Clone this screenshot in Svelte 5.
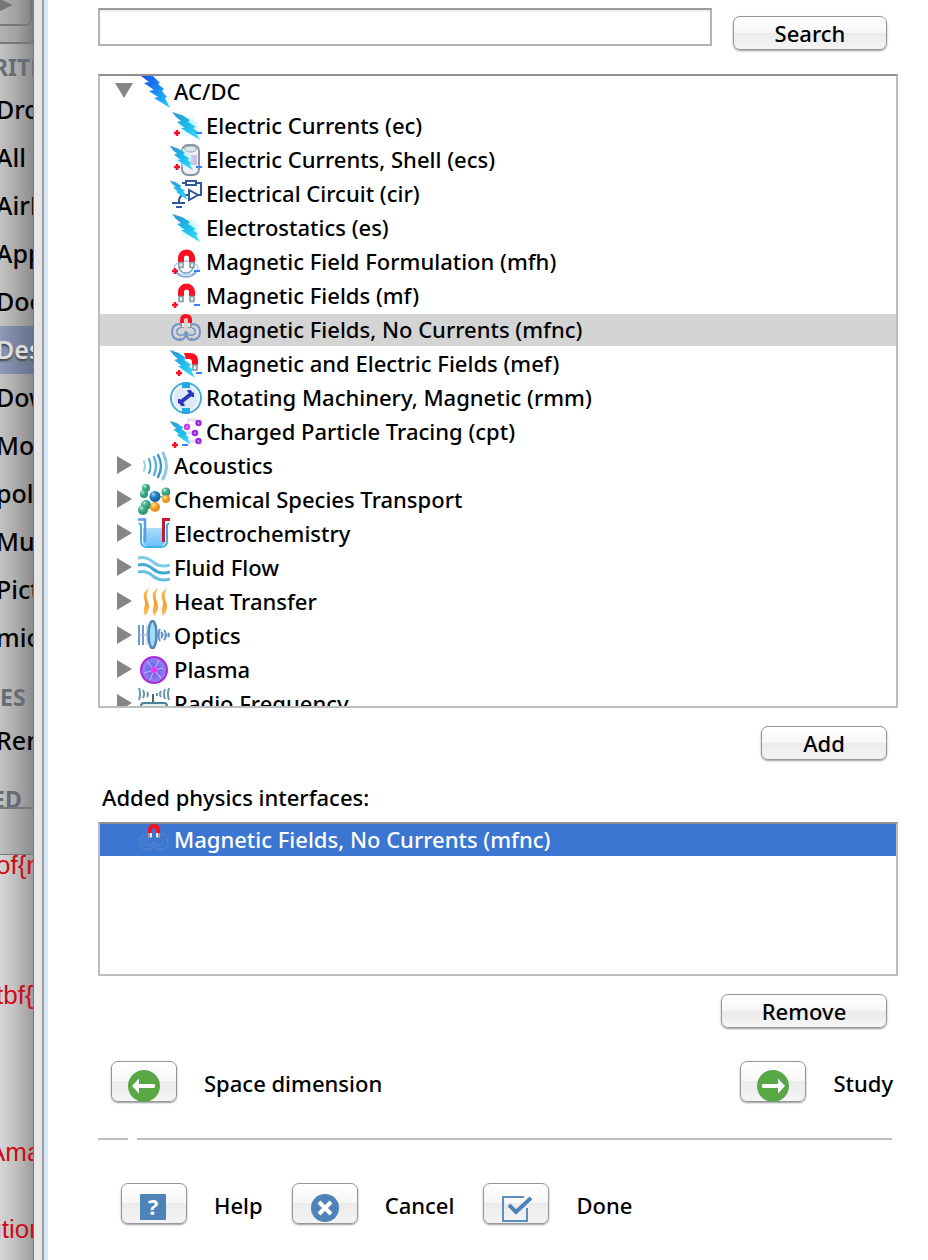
<script>
  const interfaces = [
    { icon: 'ec', name: 'Electric Currents (ec)' },
    { icon: 'ecs', name: 'Electric Currents, Shell (ecs)' },
    { icon: 'cir', name: 'Electrical Circuit (cir)' },
    { icon: 'es', name: 'Electrostatics (es)' },
    { icon: 'mfh', name: 'Magnetic Field Formulation (mfh)' },
    { icon: 'mf', name: 'Magnetic Fields (mf)' },
    { icon: 'mfnc', name: 'Magnetic Fields, No Currents (mfnc)' },
    { icon: 'mef', name: 'Magnetic and Electric Fields (mef)' },
    { icon: 'rmm', name: 'Rotating Machinery, Magnetic (rmm)' },
    { icon: 'cpt', name: 'Charged Particle Tracing (cpt)' }
  ];
  const branches = [
    { icon: 'acoustics', name: 'Acoustics' },
    { icon: 'chemical', name: 'Chemical Species Transport' },
    { icon: 'electrochem', name: 'Electrochemistry' },
    { icon: 'fluid', name: 'Fluid Flow' },
    { icon: 'heat', name: 'Heat Transfer' },
    { icon: 'optics', name: 'Optics' },
    { icon: 'plasma', name: 'Plasma' },
    { icon: 'radio', name: 'Radio Frequency' }
  ];
  const places = ['Dro', 'All', 'AirD', 'App', 'Doc', 'Des', 'Dow', 'Mov', 'polt', 'Mus', 'Pict', 'mic'];
  let selected = $state('mfnc');
  let open = $state(true);
  let query = $state('');
</script>

{#snippet plus(x, y)}
  <path d="M{x - 3} {y}h6M{x} {y - 3}v6" stroke="#f5142b" stroke-width="2.5" />
{/snippet}

{#snippet minus(x, y)}
  <path d="M{x} {y}h6" stroke="#2f86f0" stroke-width="2" />
{/snippet}

{#snippet bolt(glow, place)}
  <g transform={place}>
    {#if glow}<path d="M7 4 22 5 29 13 31 29 14 26 7 15Z" fill="url(#halo)" />{/if}
    <path d="M2 2 12 5 20 10 18 12 26 17 23 18 28 22 26 23 30 30 20 24 11 18 15 18 7 12 11 11 6 7Z" fill="url(#boltfill)" />
  </g>
{/snippet}

{#snippet magnet(place)}
  <g transform={place} fill="none">
    <path d="M11 16V12a5.500 5.500 0 0 1 11 0v4" stroke="#fb1020" stroke-width="6" />
    <path d="M9 16.5h4v5H9zM20 16.5h4v5h-4z" fill="#e8efef" stroke="#84999f" stroke-width="1.6" />
  </g>
{/snippet}

{#snippet icon(name)}
  <svg class="icon" viewBox="0 0 32 32" width="32" height="32" fill="none" aria-hidden="true">
    {#if name === 'acdc'}
      <path d="M3 0H15L22 7 20 8 26 13 24 15 29 21 27 22 32 32 16 22 20 21 11 15 16 14 6 7 11 6Z" fill="url(#mainbolt)" />
    {:else if name === 'ec'}
      {@render bolt(true, '')}{@render plus(7, 23)}{@render minus(26, 23)}
    {:else if name === 'ecs'}
      <rect x="12" y="1" width="17" height="30" rx="6" fill="#f1eff6" stroke="#8496a2" stroke-width="2" />
      <ellipse cx="20.500" cy="5" rx="6" ry="3" fill="#dfe5ea" stroke="#93a3ae" />
      <path d="M21 11h6v10h-6z" fill="#c9c1de" />
      {@render bolt(true, 'translate(-2 0) scale(.84 .88)')}{@render plus(7, 23)}{@render minus(26, 23)}
    {:else if name === 'cir'}
      <path d="M12 5h4M26 5h5v12h-3M19 17h-5q-5 0-5 7M2 25h13M6 29h6M16 3h10v4H16zM19 12v10l9-5z" stroke="#31599a" stroke-width="2" />
      {@render bolt(false, 'translate(-1.500 1) scale(.64 .7)')}
    {:else if name === 'es'}
      {@render bolt(true, '')}
    {:else if name === 'mfh'}
      <ellipse cx="16" cy="22" rx="12" ry="7" stroke="#b4cfe8" stroke-width="1.500" />
      <path d="M5 24q3 7 11 7t11-7M9 22q2 5 7 5t7-5" stroke="#7ba3cb" stroke-width="1.600" />
      {@render magnet('')}{@render plus(5, 25)}{@render minus(24, 25)}
    {:else if name === 'mf'}
      {@render magnet('')}{@render plus(5, 25)}{@render minus(24, 25)}
    {:else if name === 'mfnc' || name === 'mfnc-dim'}
      <g stroke="#7196c2" stroke-width="2" opacity={name === 'mfnc-dim' ? 0.3 : 1}>
        <path d="M10 10q-8 0-8 8t9 8q5-1 5-9M22 10q8 0 8 8t-9 8q-5-1-5-9" />
        <path d="M10 14q-4 1-3 5 1 3 6 2l3-3M22 14q4 1 3 5-1 3-6 2l-3-3M8 26l3-2M24 26l-3-2" stroke-width="1.500" />
      </g>
      <path d="M12 9V6q0-4 4-4t4 4v3" stroke="#fb1020" stroke-width="4" />
      <path d="M10 9h4v5h-4zM18 9h4v5h-4z" fill="#929ba0" />
      <path d="M12 9h2v4h-2zM18 9h2v4h-2z" fill="#e9eef0" />
    {:else if name === 'mef'}
      <path d="M14 5h6q8 0 8 8v4h-6v-3q0-3-3-3h-3z" fill="#fb1020" />
      <path d="M23 17h4v5h-4z" fill="#e8efef" stroke="#84999f" stroke-width="1.600" />
      {@render bolt(false, 'translate(-2 0) scale(.9 1)')}{@render plus(9, 25)}{@render minus(26, 25)}
    {:else if name === 'rmm'}
      <circle cx="16" cy="16" r="15" fill="#dfeaf8" stroke="#4aaadd" stroke-width="2" />
      <circle cx="16" cy="16" r="13" stroke="#f4faff" stroke-width="1.500" />
      <path d="M12 1q4-2 8 0v5h-8zM12 26h8v5q-4 2-8 0z" fill="#20a9e4" />
      <path d="M11 20 21 12" stroke="#2b36bd" stroke-width="4" />
      <path d="M8 17h2l5 6-1 1h-3l-1-2-2-1zM18 8h3l1 2 2 1v4h-2l-5-6z" fill="#2b36bd" />
    {:else if name === 'cpt'}
      <path d="M17 4h10M15 10l4-3M18 17h6M19 25h8" stroke="#ecd9f1" stroke-width="3" />
      {@render bolt(false, 'translate(-2 3) scale(.76 .86)')}
      <g stroke="#9c2de0" stroke-width="2.500" fill="#eedbfa">
        <circle cx="28.500" cy="7" r="2" /><circle cx="17" cy="11" r="2" stroke="#d43ee6" />
        <circle cx="25" cy="17" r="2" /><circle cx="28.500" cy="25" r="2" />
      </g>
      {@render plus(5, 29)}{@render minus(12, 29)}
    {:else if name === 'acoustics'}
      <g stroke-linecap="round">
        <path d="M6 11q2 5 0 10" stroke="#9ed4ec" stroke-width="2" />
        <path d="M11 9q3 7 0 14" stroke="#4aa3cd" stroke-width="2" />
        <path d="M16 7q4 9 0 18" stroke="#5cb5dc" stroke-width="2.500" />
        <path d="M20 5q6 11 0 22" stroke="#3f98c4" stroke-width="2.500" />
        <path d="M25 3q7 13 0 26" stroke="#8dc9e6" stroke-width="3" />
      </g>
    {:else if name === 'chemical'}
      <path d="M8 4 6 11M17 13l9 0M17 14v9M4 27l10-5" stroke="#7cc7ae" stroke-width="2" />
      <g fill="url(#greenball)"><circle cx="8" cy="4" r="4" /><circle cx="6" cy="10" r="4" /><circle cx="28" cy="8" r="4.500" /><circle cx="8" cy="21" r="5" /><circle cx="5" cy="26" r="5" /></g>
      <g fill="url(#orangeball)"><circle cx="28" cy="15" r="4" /><circle cx="17" cy="23" r="5" /></g>
      <circle cx="17" cy="12.500" r="5.500" fill="url(#blueball)" />
    {:else if name === 'electrochem'}
      <path d="M5 10h22v13q0 5-5 5H10q-5 0-5-5z" fill="url(#water)" />
      <path d="M1 5 3 7v16q0 6 6 6h14q6 0 6-6V7l2-2" stroke="#3fb2e8" stroke-width="2" />
      <path d="M0 1.500h7V24" stroke="#5d9be8" stroke-width="2.500" />
      <path d="M32 1.500h-6.500V24" stroke="#c41c34" stroke-width="3" />
    {:else if name === 'fluid'}
      <path d="M0 6q8-2 15 4t17 3" stroke="#7ccbe8" stroke-width="3" />
      <path d="M0 13q8-2 15 4t17 3" stroke="#43abd6" stroke-width="3" />
      <path d="M0 20q8-2 15 4t17 3" stroke="#68bfe2" stroke-width="3" />
    {:else if name === 'heat'}
      {#each [0, 9, 18] as x}
        <path transform="translate({x} 0)" d="M11 2Q4 6 6 12T6 22Q5 26 7 30 13 23 10 16T11 2Z" fill="url(#flame)" />
      {/each}
    {:else if name === 'optics'}
      <path d="M1 5v20M5 5v20" stroke="#6a9bcc" stroke-width="2" />
      <path d="M0 15h32" stroke="#8fb4d8" />
      <path d="M9 5v20" stroke="#9dbfe0" />
      <ellipse cx="14.500" cy="14.500" rx="4" ry="13.500" fill="#a3dbf3" stroke="#5284bd" stroke-width="2.500" />
      <path d="M22 9q-3 6 0 12M26 10q4 5 0 10M23 12q3 3 0 6M30 13q2 2 0 4" stroke="#6193c5" stroke-width="2" />
    {:else if name === 'plasma'}
      <circle cx="16" cy="16" r="13" fill="url(#plasmafill)" stroke="#a32fd9" stroke-width="2" />
      <path d="M16 16 9 7M16 16 21 6M16 16l9-2M16 16l7 8M16 16l-4 10M16 16 6 19" stroke="#d4b9ff" stroke-width="1.200" opacity=".8" />
      <circle cx="16" cy="16" r="3" fill="#e83be2" />
    {:else if name === 'radio'}
      <path d="M1 0q2 6 0 12M5 2q2 4 0 8M9 4q2 2 0 5M31 0q-2 6 0 12M27 1q-2 5 0 10M23 3q-2 3 0 6M19 5v3" stroke="#6798ac" stroke-width="2" />
      <path d="M15 6v9" stroke="#55636a" stroke-width="2" />
      <rect x="3" y="15" width="26" height="14" rx="3" fill="#e7f0f3" stroke="#47829b" stroke-width="2" />
    {:else if name === 'back' || name === 'next'}
      <circle cx="16" cy="16" r="16" fill="#59a846" />
      <path transform={name === 'next' ? 'rotate(180 16 16)' : ''} d="M4 16 11 8.500V14h15q1 0 1 2t-1 2H11v5.500z" fill="#fff" />
    {:else if name === 'help'}
      <rect x="2" y="2" width="26" height="26" rx="1" fill="#4d83b8" />
      <text x="15" y="23" text-anchor="middle" class="mark">?</text>
    {:else if name === 'cancel'}
      <circle cx="16" cy="16" r="14" fill="#4d83b8" />
      <path d="m10 10 12 12M22 10 10 22" stroke="#fff" stroke-width="4" />
    {:else if name === 'done'}
      <path d="M24 5H3v24h24V16" stroke="#5a8fc2" stroke-width="2" />
      <path d="m9 13 7 7L31 6" stroke="#4d83b8" stroke-width="4" />
    {/if}
  </svg>
{/snippet}

<svg class="defs" width="0" height="0" aria-hidden="true">
  <defs>
    <linearGradient id="boltfill" x1="0" y1="0" x2="1" y2="1"><stop offset="0" stop-color="#2f93d0" /><stop offset=".5" stop-color="#1cb9ee" /><stop offset="1" stop-color="#3fe0fa" /></linearGradient>
    <linearGradient id="mainbolt" x1="0" y1="0" x2="1" y2="1"><stop offset="0" stop-color="#1650e6" /><stop offset=".45" stop-color="#1984f3" /><stop offset="1" stop-color="#24d2fa" /></linearGradient>
    <radialGradient id="halo"><stop offset="0" stop-color="#8ee9f7" /><stop offset="1" stop-color="#d8f7fc" stop-opacity=".2" /></radialGradient>
    <radialGradient id="greenball" cx=".35" cy=".3"><stop offset="0" stop-color="#c8f0df" /><stop offset=".5" stop-color="#45b491" /><stop offset="1" stop-color="#2f9877" /></radialGradient>
    <radialGradient id="orangeball" cx=".35" cy=".3"><stop offset="0" stop-color="#ffe9bd" /><stop offset=".5" stop-color="#f8b040" /><stop offset="1" stop-color="#ea921d" /></radialGradient>
    <radialGradient id="blueball" cx=".35" cy=".3"><stop offset="0" stop-color="#a5dcf7" /><stop offset=".5" stop-color="#2b8bc8" /><stop offset="1" stop-color="#1a6aa8" /></radialGradient>
    <linearGradient id="water" x1="0" y1="0" x2="0" y2="1"><stop offset="0" stop-color="#a9dcfa" /><stop offset="1" stop-color="#6fc0f4" /></linearGradient>
    <linearGradient id="flame" x1="0" y1="0" x2="0" y2="1"><stop offset="0" stop-color="#fbc678" /><stop offset=".5" stop-color="#fa9b22" /><stop offset="1" stop-color="#fbc070" /></linearGradient>
    <radialGradient id="plasmafill"><stop offset="0" stop-color="#c15bf0" /><stop offset=".4" stop-color="#6f6af0" /><stop offset=".8" stop-color="#8d7df2" /><stop offset="1" stop-color="#c054ea" /></radialGradient>
  </defs>
</svg>

<div class="screen">
  <aside class="behind">
    <div class="toolbar"><span class="tool"><svg width="16" height="16" viewBox="0 0 16 16"><path d="M0 -1 13 5 0 11z" fill="#777" /></svg></span></div>
    <nav class="places">
      <h2>RITE</h2>
      {#each places as place}
        <div class="place" class:current={place === 'Des'}>{place}</div>
      {/each}
      <h2 class="group">ES</h2>
      <div class="place">Ren</div>
      <h2 class="cut">ED</h2>
    </nav>
    <div class="status"></div>
    <div class="source">
      <p>of{'{'}r</p>
      <p>tbf{'{'}</p>
      <p class="mid">Ama</p>
      <p>ition</p>
    </div>
  </aside>
  <div class="edge"></div>

  <main>
    <form class="search" onsubmit={(e) => e.preventDefault()}>
      <input type="text" aria-label="Search" bind:value={query} />
      <button class="push wide" type="submit">Search</button>
    </form>

    <ul class="box tree" role="tree">
      <li class="row" role="treeitem" aria-selected="false" aria-expanded={open}>
        <button class="toggle" aria-label="AC/DC" onclick={() => (open = !open)}>
          <svg width="18" height="18" viewBox="0 0 18 18"><path d={open ? 'M0 1h18L9 16z' : 'M2 0v18l15-9z'} fill="#868686" /></svg>
        </button>
        {@render icon('acdc')}<span>AC/DC</span>
      </li>
      {#if open}
        {#each interfaces as item}
          <li class="row child" class:selected={selected === item.icon} role="treeitem" aria-selected={selected === item.icon}>
            {@render icon(item.icon)}<button class="name" onclick={() => (selected = item.icon)}>{item.name}</button>
          </li>
        {/each}
      {/if}
      {#each branches as branch}
        <li class="row" role="treeitem" aria-selected="false" aria-expanded="false">
          <button class="toggle" aria-label={branch.name}>
            <svg width="18" height="18" viewBox="0 0 18 18"><path d="M2 0v18l15-9z" fill="#868686" /></svg>
          </button>
          {@render icon(branch.icon)}<span>{branch.name}</span>
        </li>
      {/each}
    </ul>

    <div class="action"><button class="push narrow">Add</button></div>

    <h1 id="added">Added physics interfaces:</h1>
    <ul class="box added" role="listbox" aria-labelledby="added">
      <li class="row active" role="option" aria-selected="true">
        {@render icon('mfnc-dim')}<span>Magnetic Fields, No Currents (mfnc)</span>
      </li>
    </ul>

    <div class="action"><button class="push">Remove</button></div>

    <div class="steps">
      <div class="pair"><button class="push image" id="back" aria-labelledby="back-label">{@render icon('back')}</button><label id="back-label" for="back">Space dimension</label></div>
      <div class="pair"><button class="push image" id="next" aria-labelledby="next-label">{@render icon('next')}</button><label id="next-label" for="next">Study</label></div>
    </div>

    <div class="rule"><span></span><span></span></div>

    <footer>
      <div class="pair"><button class="push image" id="help" aria-labelledby="help-label">{@render icon('help')}</button><label id="help-label" for="help">Help</label></div>
      <div class="pair"><button class="push image" id="cancel" aria-labelledby="cancel-label">{@render icon('cancel')}</button><label id="cancel-label" for="cancel">Cancel</label></div>
      <div class="pair"><button class="push image" id="done" aria-labelledby="done-label">{@render icon('done')}</button><label id="done-label" for="done">Done</label></div>
    </footer>
  </main>
</div>

<style>
  :global(body) { background: #fff; }
  * { box-sizing: border-box; }
  .defs { position: absolute; }
  .screen {
    display: grid;
    grid-template-columns: 34px 14px minmax(0, 1fr);
    min-height: 100vh;
    font: 500 22px/30px "Noto Sans", "Open Sans", sans-serif;
    color: #000;
  }
  button, input { font: inherit; color: inherit; }
  ul, h1, h2, p { margin: 0; padding: 0; font: inherit; list-style: none; }
  .icon { display: block; flex: none; }
  .mark { font: bold 22px "Noto Sans", sans-serif; fill: #fff; }

  .behind {
    display: flex;
    flex-direction: column;
    overflow: hidden;
    white-space: nowrap;
    border-right: 1px solid #777;
    background: linear-gradient(90deg, #d6d6d6, #bebebe 50%, #9d9d9d);
  }
  .toolbar {
    height: 44px;
    border-bottom: 2px solid #777;
    background: linear-gradient(90deg, #b2b2b2, #a2a2a2 50%, #808080);
  }
  .tool {
    display: block;
    width: 32px;
    height: 26px;
    border: solid #777;
    border-width: 0 2px 2px 0;
    border-radius: 0 0 6px 0;
  }
  .tool svg { display: block; }
  .places {
    height: 763px;
    overflow: hidden;
    background: linear-gradient(90deg, #c3c3c3, #ababab 50%, #8b8b8b);
    font-size: 25px;
    line-height: 46px;
  }
  .places h2 { margin-left: -7px; height: 42px; font-size: 23px; font-weight: 700; color: #676b74; }
  .places .group { height: 55px; padding-top: 12px; margin-left: 0; }
  .places .cut { margin-left: -8px; padding-top: 11px; }
  .place { height: 48px; text-indent: -4px; }
  .current {
    color: #dcdcdc;
    font-weight: 600;
    text-shadow: 0 2px 2px #444;
    background: linear-gradient(90deg, #8d99b5, #66728c);
  }
  .status {
    height: 48px;
    border: solid #777;
    border-width: 2px 0 1px;
    background: linear-gradient(90deg, #bfbfbf, #8f8f8f);
  }
  .source {
    display: grid;
    grid-template-rows: 130px 157px 77px 32px;
    font: 26px/20px "Liberation Sans", Arial, sans-serif;
    color: #cc0c18;
  }
  .source p { text-indent: -4px; }
  .source .mid { text-indent: -12px; }
  .edge {
    background: linear-gradient(90deg, #e6e6e6 8px, #9d9d9d 8px 10px, #d6e7f8 10px);
  }

  main { padding: 8px 30px 36px 50px; }
  .search { display: flex; gap: 21px; padding-right: 11px; }
  .search input {
    flex: 1;
    min-width: 0;
    height: 38px;
    padding: 0 8px;
    border: 2px solid #b4b4b4;
    border-top-color: #999;
    border-radius: 0;
    background: #fff;
    box-shadow: inset 0 2px 2px #eee;
    outline: none;
  }
  .push {
    width: 166px;
    height: 34px;
    padding: 0;
    line-height: 32px;
    border: 1px solid #979797;
    border-radius: 7px;
    background: linear-gradient(#fff, #f7f7f7 48%, #ebebeb 50%, #f4f4f4);
    box-shadow: 0 1px 2px #999;
  }
  .wide { width: 154px; margin-top: 8px; }
  .narrow { width: 126px; }
  .image { width: 66px; height: 41px; padding-top: 8px; display: flex; justify-content: center; flex: none; }

  .box { border: 2px solid #bcbcbc; border-top-color: #8e8e8e; background: #fff; overflow: hidden; }
  .tree { height: 634px; margin-top: 24px; }
  .added { height: 154px; }
  .row { display: flex; align-items: flex-start; height: 32px; margin-bottom: 2px; padding-left: 15px; white-space: nowrap; }
  .row .icon { margin-right: 4px; }
  .child { padding-left: 70px; }
  .selected { background: #d4d4d4; }
  .active { padding-left: 38px; color: #fff; background: #3b76d3; }
  .toggle { display: flex; width: 18px; height: 18px; margin: 6px 5px 0 0; padding: 0; border: 0; background: none; }
  .name { padding: 0; border: 0; background: none; line-height: 30px; }

  .action { display: flex; justify-content: flex-end; margin-top: 18px; padding-right: 11px; }
  h1 { margin: 22px 0 10px 4px; }
  .steps { display: flex; justify-content: space-between; margin-top: 33px; padding: 0 5px 0 13px; }
  .pair { display: flex; align-items: center; gap: 27px; height: 42px; padding-bottom: 1px; }
  .pair label { margin-top: 2px; }
  .rule { display: flex; gap: 9px; margin-top: 35px; padding-right: 6px; }
  .rule span { height: 2px; background: #bdbdbd; flex: 1; }
  .rule span:first-child { flex: 0 0 30px; }
  footer { display: flex; flex-wrap: wrap; gap: 29px; margin-top: 43px; padding-left: 23px; }
</style>
